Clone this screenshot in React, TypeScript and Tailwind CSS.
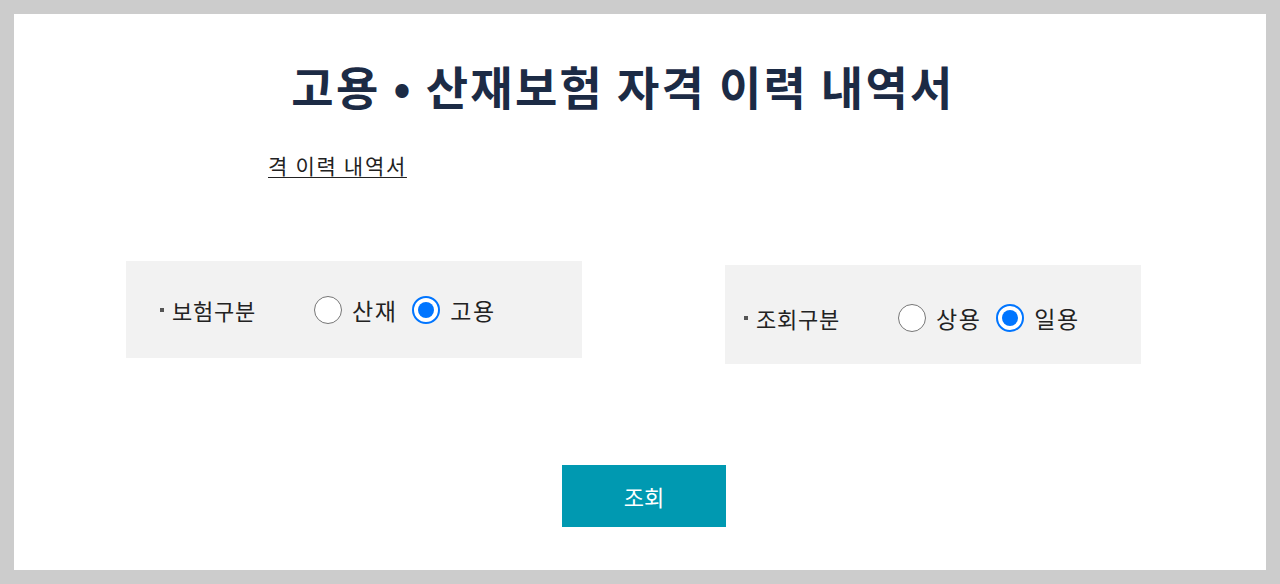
const font = { fontFamily: '"Noto Sans CJK KR", "Noto Sans", sans-serif' };

function Radio({ checked, label }: { checked?: boolean; label: string }) {
  return (
    <label className="flex items-center">
      {checked ? (
        <span className="flex h-[28px] w-[28px] items-center justify-center rounded-full border-2 border-[#0075ff] bg-white">
          <span className="h-[16px] w-[16px] rounded-full bg-[#0075ff]" />
        </span>
      ) : (
        <span className="h-[28px] w-[28px] rounded-full border-[1.5px] border-[#767676] bg-white" />
      )}
      <span className="ml-[10px] text-[23px] leading-[28px] tracking-[1.5px] text-[#222]">{label}</span>
    </label>
  );
}

function OptionBox({
  title,
  options,
  className,
}: {
  title: string;
  options: Array<{ label: string; checked?: boolean }>;
  className: string;
}) {
  return (
    <div className={`flex items-center bg-[#f2f2f2] ${className}`}>
      <div className="flex w-[154px] items-center">
        <span className="mr-[8px] h-[4px] w-[4px] bg-[#555]" />
        <span className="text-[22px] leading-[28px] tracking-[0.8px] text-[#222]">{title}</span>
      </div>
      <div className="flex items-center gap-[15px]">
        {options.map((o) => (
          <Radio key={o.label} label={o.label} checked={o.checked} />
        ))}
      </div>
    </div>
  );
}

export default function App() {
  return (
    <div className="h-[584px] w-[1280px] bg-[#cccccc] p-[14px]" style={font}>
      <div className="flex h-full flex-col bg-white">
        <h1 className="mt-[43px] pr-[34px] text-center text-[46px] font-bold leading-[56px] tracking-[2.3px] text-[#1c2b45]">
          고용 • 산재보험 자격 이력 내역서
        </h1>
        <div className="mt-[38px] pl-[254px]">
          <a
            className="text-[21px] leading-[28px] tracking-[1.7px] text-[#222] underline decoration-1 underline-offset-[3px]"
            href="#"
          >
            격 이력 내역서
          </a>
        </div>
        <div className="mt-[82px] flex items-start">
          <OptionBox
            className="ml-[112px] h-[97px] w-[456px] pb-[3px] pl-[34px] pt-[3px]"
            title="보험구분"
            options={[{ label: "산재" }, { label: "고용", checked: true }]}
          />
          <OptionBox
            className="ml-[143px] mt-[4px] h-[99px] w-[416px] pl-[19px] pt-[6px]"
            title="조회구분"
            options={[{ label: "상용" }, { label: "일용", checked: true }]}
          />
        </div>
        <div className="mt-[101px] flex justify-center pl-[8px]">
          <button className="h-[62px] w-[164px] bg-[#0099b1] text-[22px] text-white">조회</button>
        </div>
      </div>
    </div>
  );
}
